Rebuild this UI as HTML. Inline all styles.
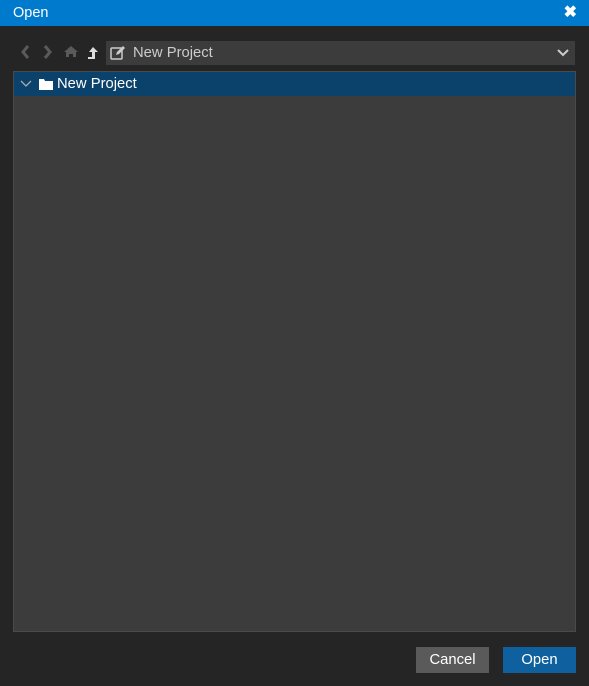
<!DOCTYPE html>
<html><head><style>
*{margin:0;padding:0;box-sizing:border-box}
body{width:589px;height:686px;background:#252525;font-family:"Liberation Sans",sans-serif;position:relative;overflow:hidden}
.title{position:absolute;left:0;top:0;width:589px;height:26px;background:#007acc;color:#fff;font-size:14.5px;line-height:26px;padding-left:13px}
.x{position:absolute;right:12px;top:5px;color:#fff;font-size:16px;font-weight:bold;line-height:16px}
.path{position:absolute;left:106px;top:41px;width:469px;height:24px;background:#3c3c3c;color:#ccc;font-size:14.8px;line-height:24px;padding-left:27px}
.tree{position:absolute;left:13px;top:71px;width:563px;height:561px;background:#3c3c3c;border:1px solid #4a4a4a}
.sel{position:absolute;left:0;top:0;width:561px;height:24px;background:#0b426b;color:#fff;font-size:14.8px;line-height:24px;padding-left:43px}
.btn{position:absolute;top:647px;width:73px;height:26px;color:#fff;font-size:14.8px;line-height:26px;text-align:center}
</style></head><body>
<div class="title">Open<span class="x">✖</span></div>
<svg style="position:absolute;left:18px;top:43px" width="90" height="18">
<path d="M10 3 L5 9 L10 15" stroke="#5a5a5a" stroke-width="3" fill="none"/>
<path d="M27 3 L32 9 L27 15" stroke="#5a5a5a" stroke-width="3" fill="none"/>
<path d="M46 9 L53 3 L60 9 L58 9 L58 14 L55 14 L55 11 L51 11 L51 14 L48 14 L48 9Z" fill="#5a5a5a"/>
<path d="M75 4 L71 9 L74 9 L74 14 L70 14 L70 16 L77 16 L77 9 L80 9Z" fill="#ddd"/>
</svg>
<div class="path"><svg style="position:absolute;left:4px;top:5px" width="16" height="14"><rect x="1" y="2" width="11" height="11" rx="1" fill="none" stroke="#ccc" stroke-width="1.5"/><path d="M6 9 L7 6 L13 0 L15 2 L9 8Z" fill="#ccc"/></svg>New Project<svg style="position:absolute;right:6px;top:8px" width="12" height="8"><path d="M1 1 L6 6 L11 1" stroke="#ccc" stroke-width="2" fill="none"/></svg></div>
<div class="tree"><div class="sel"><svg style="position:absolute;left:6px;top:8px" width="12" height="8"><path d="M1 1 L6 6 L11 1" stroke="#aaa" stroke-width="1.3" fill="none"/></svg><svg style="position:absolute;left:25px;top:6px" width="15" height="12"><path d="M0 1 L5 1 L6 3 L14 3 L14 12 L0 12Z" fill="#fff"/></svg>New Project</div></div>
<div class="btn" style="left:416px;background:#5a5a5a">Cancel</div>
<div class="btn" style="left:503px;background:#0e609e">Open</div>
</body></html>
